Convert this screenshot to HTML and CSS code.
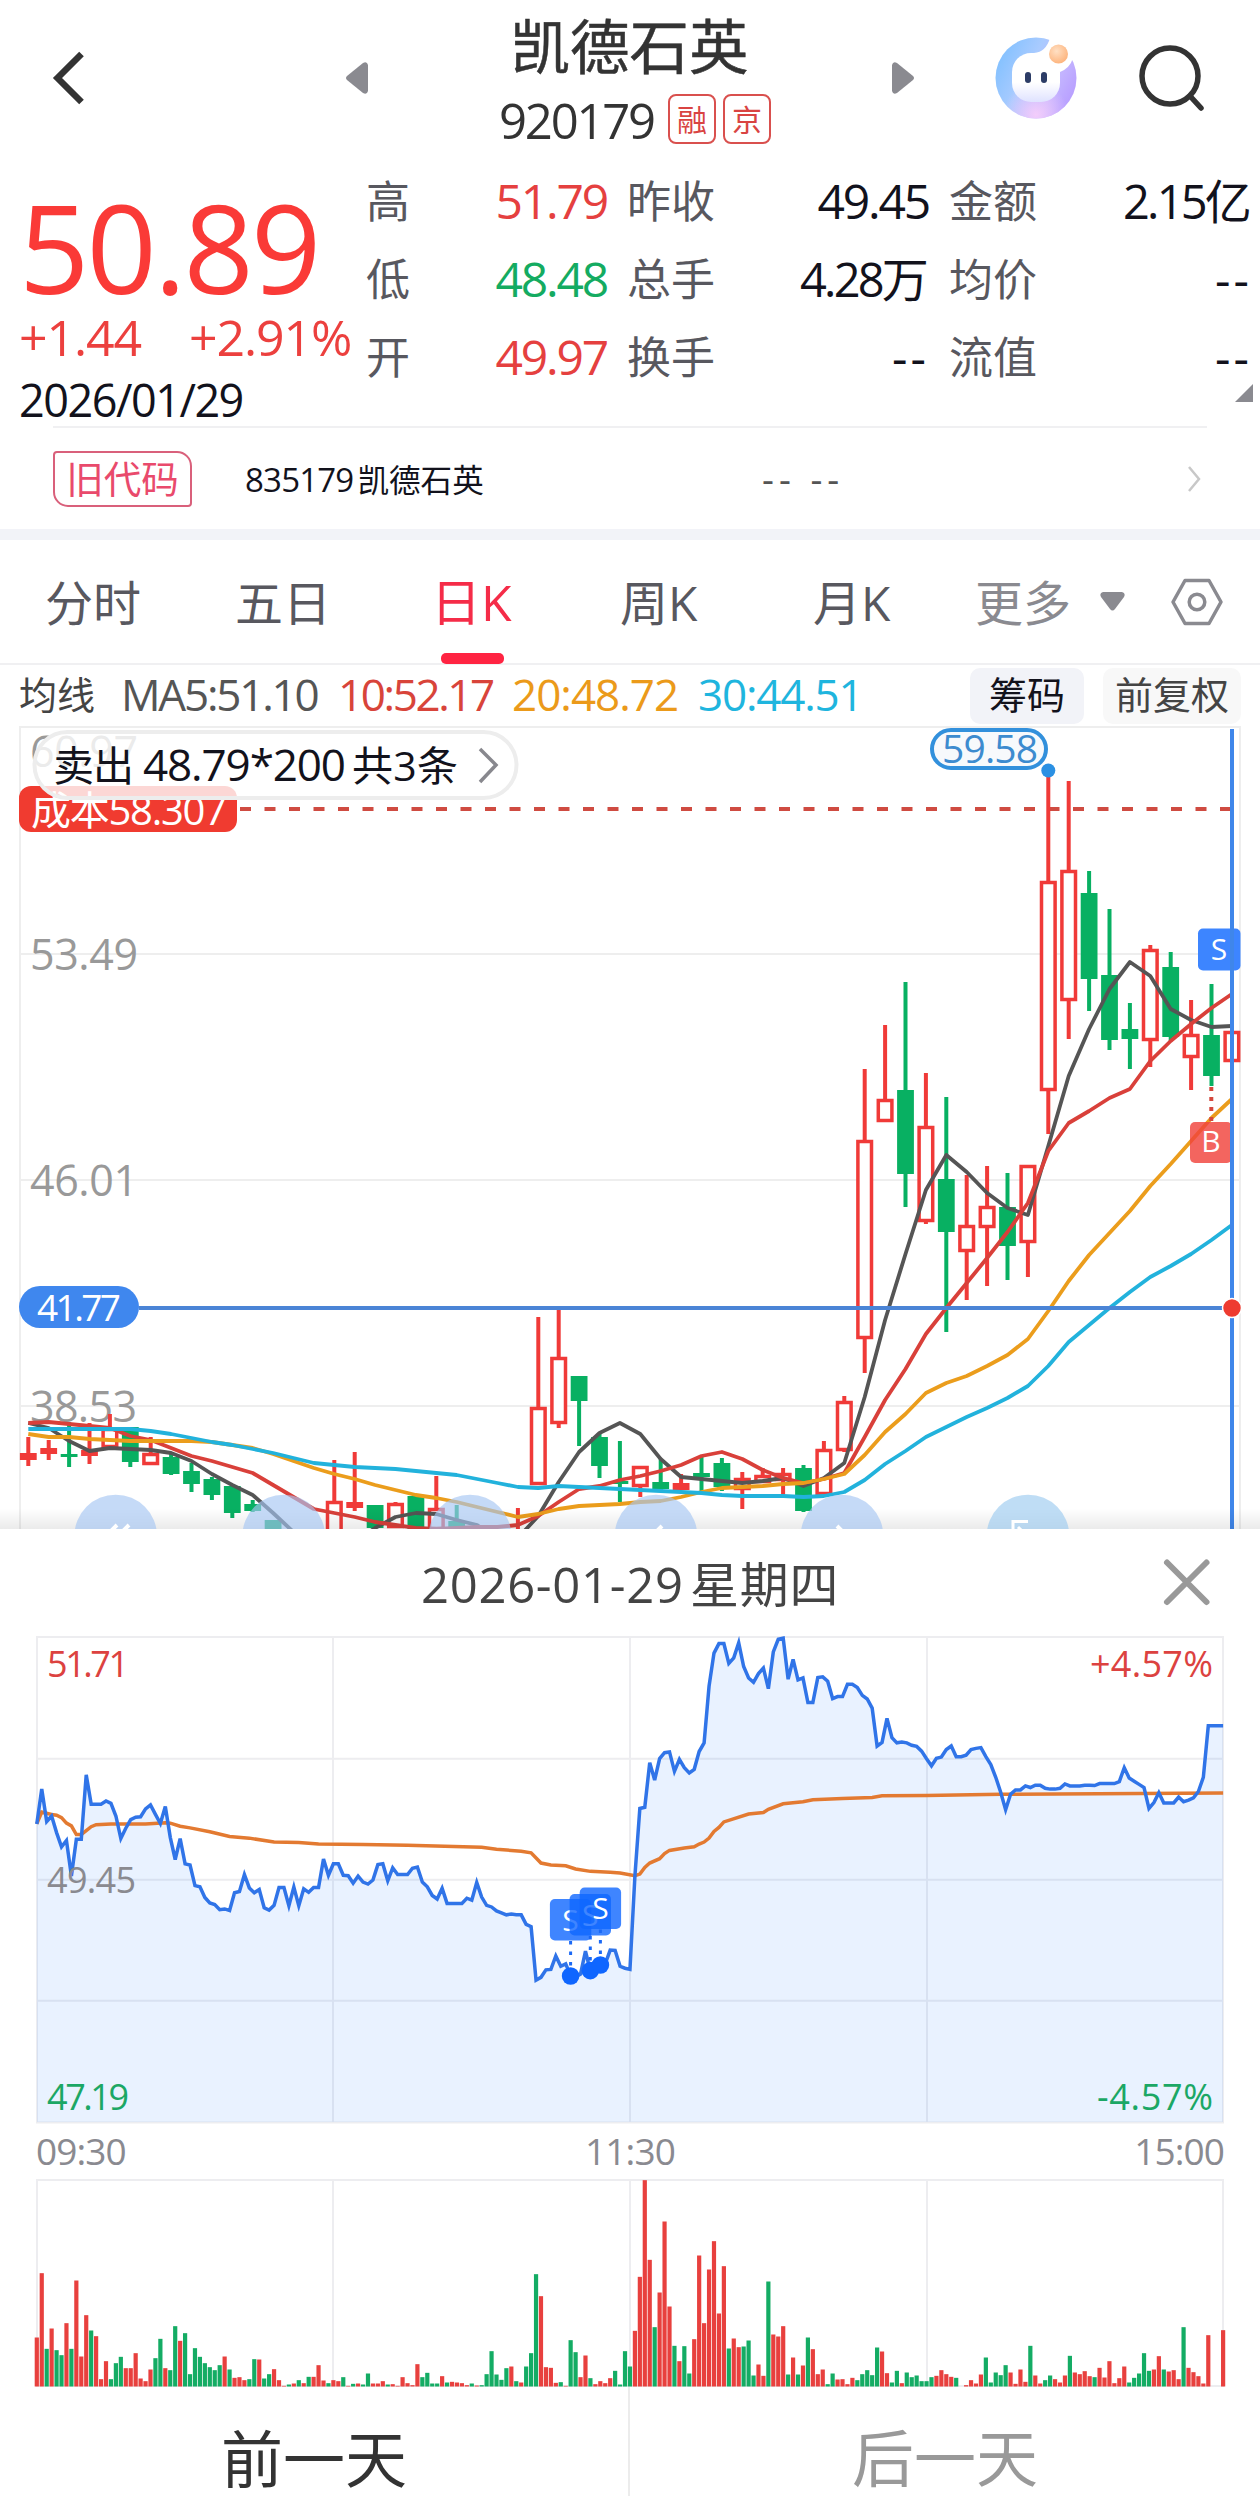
FILE: index.html
```html
<!DOCTYPE html>
<html lang="zh-CN">

<head>
    <meta charset="UTF-8">
    <meta name="viewport" content="width=device-width, initial-scale=1.0">
    <title>凯德石英 920179</title>
    <link rel="stylesheet" href="styles.css">
</head>

<body>
    <header class="header">
        <svg class="back" width="40" height="60" viewBox="0 0 40 60">
            <path d="M31.500 6 L7.500 30 L31.500 54" fill="none" stroke="#333" stroke-width="6.500" />
        </svg>
        <svg class="prev" width="24" height="34" viewBox="0 0 24 34">
            <path d="M23 4 V30 Q22 34 18 32 L2 19 Q0 17 2 15 L18 2 Q22 0 23 4Z" fill="#8a8a90" />
        </svg>
        <div class="stock">
            <h1>凯德石英</h1>
            <div class="code">
                <span class="code-num">920179</span>
                <span class="mark">融</span>
                <span class="mark">京</span>
            </div>
        </div>
        <svg class="next" width="24" height="34" viewBox="0 0 24 34">
            <path d="M1 4 V30 Q2 34 6 32 L22 19 Q24 17 22 15 L6 2 Q2 0 1 4Z" fill="#8a8a90" />
        </svg>
        <svg class="robot" width="84" height="84" viewBox="0 0 84 84">
            <defs>
                <linearGradient id="ring" x1="0" y1="0.2" x2="1" y2="0.7">
                    <stop offset="0" stop-color="#7fc0ff" />
                    <stop offset="0.4" stop-color="#a9cbff" />
                    <stop offset="0.75" stop-color="#c3b4ff" />
                    <stop offset="1" stop-color="#b79dff" />
                </linearGradient>
                <radialGradient id="glow" cx="0.5" cy="0.95" r="0.4">
                    <stop offset="0" stop-color="#f3cdfb" />
                    <stop offset="1" stop-color="#f3cdfb" stop-opacity="0" />
                </radialGradient>
                <radialGradient id="ball" cx="0.4" cy="0.35" r="0.7">
                    <stop offset="0" stop-color="#ffe0c4" />
                    <stop offset="1" stop-color="#fdb27a" />
                </radialGradient>
                <linearGradient id="face" x1="0" y1="0" x2="0" y2="1">
                    <stop offset="0.6" stop-color="#fff" />
                    <stop offset="1" stop-color="#dfe2ff" />
                </linearGradient>
            </defs>
            <circle cx="42" cy="42" r="40.500" fill="url(#ring)" />
            <circle cx="42" cy="42" r="40.500" fill="url(#glow)" />
            <path d="M56 2 Q52 16 40 17 L66 36 Q76 32 79 22 L84 14 L70 0Z" fill="#fff" />
            <rect x="18" y="17" width="48" height="49" rx="19" fill="url(#face)" />
            <rect x="31" y="36" width="6" height="11" rx="3" fill="#2c3c66" />
            <rect x="47" y="36" width="6" height="11" rx="3" fill="#2c3c66" />
            <circle cx="64.500" cy="18" r="9.500" fill="url(#ball)" />
        </svg>
        <svg class="search" width="72" height="72" viewBox="0 0 72 72">
            <circle cx="34" cy="34" r="28" fill="none" stroke="#333" stroke-width="5.500" />
            <path d="M54 54 L65 66" stroke="#333" stroke-width="5.500" stroke-linecap="round" />
        </svg>
    </header>

    <section class="quote">
        <div class="now">
            <div class="price">50.89</div>
            <div class="change"><span>+1.44</span><span>+2.91%</span></div>
            <div class="date">2026/01/29</div>
        </div>
        <dl class="stats">
            <div><dt>高</dt><dd class="up">51.79</dd></div>
            <div><dt>昨收</dt><dd>49.45</dd></div>
            <div><dt>金额</dt><dd class="unit">2.15亿</dd></div>
            <div><dt>低</dt><dd class="down">48.48</dd></div>
            <div><dt>总手</dt><dd class="unit">4.28万</dd></div>
            <div><dt>均价</dt><dd class="none">--</dd></div>
            <div><dt>开</dt><dd class="up">49.97</dd></div>
            <div><dt>换手</dt><dd class="none">--</dd></div>
            <div><dt>流值</dt><dd class="none">--</dd></div>
        </dl>
        <svg class="corner" width="18" height="18" viewBox="0 0 18 18"><path d="M18 0 V18 H0Z" fill="#8a8a90" /></svg>
    </section>

    <section class="oldcode">
        <span class="oldcode-tag">旧代码</span>
        <span class="oldcode-name"><b>835179</b>凯德石英</span>
        <span class="oldcode-val">-- --</span>
        <svg width="16" height="28" viewBox="0 0 16 28"><path d="M2 2 L12 14 L2 26" fill="none" stroke="#c8c8c8" stroke-width="2.500" /></svg>
    </section>

    <nav class="tabs">
        <span>分时</span>
        <span>五日</span>
        <span class="active">日K</span>
        <span>周K</span>
        <span>月K</span>
        <span class="more">更多</span>
        <svg width="26" height="22" viewBox="0 0 26 22"><path d="M3 1 H22 Q26 2 24 6 L15 18 Q12.500 21 10 18 L1 6 Q-1 2 3 1Z" fill="#8a8a90" /></svg>
        <svg width="54" height="48" viewBox="0 0 54 48" fill="none" stroke="#8a8a90" stroke-width="3.500">
            <path d="M15 2.500 H39 L51 24 L39 45.500 H15 L3 24Z" stroke-linejoin="round" />
            <circle cx="27" cy="24" r="7.800" />
        </svg>
    </nav>

    <div class="ma">
        <span class="ma-name">均线</span>
        <span class="ma5">MA5:51.10</span>
        <span class="ma10">10:52.17</span>
        <span class="ma20">20:48.72</span>
        <span class="ma30">30:44.51</span>
        <span class="chip">筹码</span>
        <span class="chip adjust">前复权</span>
    </div>

    <svg class="kline" width="1260" height="803" viewBox="0 726 1260 803">
        <defs>
            <linearGradient id="shade" x1="0" y1="0" x2="0" y2="1">
                <stop offset="0" stop-color="#000" stop-opacity="0" />
                <stop offset="1" stop-color="#000" stop-opacity="0.080" />
            </linearGradient>
        </defs>
        <path d="M20 1540 V727 H1240 V1540 M20 954 H1240 M20 1180 H1240 M20 1406 H1240" fill="none" stroke="#eee" stroke-width="2" />
        <g class="axis">
            <text x="30" y="767" textLength="108">60.97</text>
            <text x="30" y="970" textLength="108">53.49</text>
            <text x="30" y="1196" textLength="108">46.01</text>
            <text x="30" y="1422" textLength="107">38.53</text>
        </g>
        <path d="M240 809 H1232" stroke="#cf4b41" stroke-width="4" stroke-dasharray="11 13.500" />
        <g id="candles"></g>
        <g id="averages"></g>

        <path d="M139 1308 H1222" stroke="#4a84d6" stroke-width="4" />
        <rect x="19" y="1286" width="120" height="42" rx="21" fill="#3f87ee" />
        <text class="tag-text" x="37" y="1321" textLength="84" font-size="37">41.77</text>

        <rect x="19" y="786" width="218" height="46" rx="12" fill="#f03b30" />
        <text class="tag-text" x="31" y="825" textLength="196" font-size="40">成本58.307</text>

        <rect x="932" y="730" width="114" height="38" rx="19" fill="#f7f9fc" stroke="#3290dc" stroke-width="4" />
        <text x="942" y="763" textLength="96" font-size="39" fill="#3d8bcf">59.58</text>
        <circle cx="1048.300" cy="770.500" r="7" fill="#2b90e3" />

        <path d="M1211.300 1087 V1122" stroke="#d4473c" stroke-width="4" stroke-dasharray="4 6" />
        <rect x="1190" y="1122" width="42" height="41" rx="5" fill="#f0433c" fill-opacity="0.820" />
        <text class="bs" x="1211" y="1152" text-anchor="middle">B</text>
        <rect x="1198" y="928.500" width="42.500" height="42" rx="5" fill="#3d85ff" />
        <text class="bs" x="1219" y="960" text-anchor="middle">S</text>
        <path d="M1232 729 V1529" stroke="#3f86ea" stroke-width="4" />
        <circle cx="1232" cy="1308" r="9.500" fill="#ee3b30" stroke="#fff" stroke-width="1.500" />

        <rect x="0" y="1508" width="1260" height="21" fill="url(#shade)" />
        <g fill="#a6c6f2" fill-opacity="0.650">
            <circle cx="115.700" cy="1536" r="41.300" />
            <circle cx="283.700" cy="1536" r="41.300" />
            <circle cx="470" cy="1536" r="41.300" />
            <circle cx="656" cy="1536" r="41.300" />
            <circle cx="842" cy="1536" r="41.300" />
            <circle cx="1028" cy="1536" r="41.300" fill="#9ccbf0" />
        </g>
        <g fill="none" stroke="#fff" stroke-width="4">
            <path d="M117 1525 L105 1537 M129 1525 L117 1537" />
            <path d="M662 1526 L650 1538 M837 1526 L849 1538" />
            <path d="M1028 1521.500 H1013 V1540 M1018 1527 L1028 1537" stroke-width="3" />
        </g>

        <rect x="34.500" y="732" width="482" height="66" rx="33" fill="#fff" fill-opacity="0.800" stroke="#ededed" stroke-width="4" />
        <g class="trade">
            <text x="53" y="781" font-size="41" textLength="81">卖出</text>
            <text x="143" y="781" textLength="203">48.79*200</text>
            <text x="352" y="781" font-size="41" textLength="106">共3条</text>
        </g>
        <path d="M480 749 L496 765 L480 782" fill="none" stroke="#88888e" stroke-width="3.500" />
    </svg>

    <section class="day">
        <div class="day-head">
            <h2>2026-01-29 星期四</h2>
            <svg width="50" height="50" viewBox="0 0 50 50"><path d="M5 5.500 L44.500 45 M44.500 5.500 L5 45" stroke="#999" stroke-width="6" stroke-linecap="round" /></svg>
        </div>
        <svg class="minute" width="1260" height="492" viewBox="0 1634 1260 492">
            <path d="M37 1637 H1223 V2122.500 H37Z M333 1637 V2122 M630 1637 V2122 M927 1637 V2122 M37 1758.700 H1223 M37 1879.700 H1223 M37 2000.700 H1223" fill="none" stroke="#ededf0" stroke-width="2" />
            <g id="trend"></g>
            <g class="minute-text">
                <text x="47" y="1676.500" textLength="82" fill="#dc4240">51.71</text>
                <text x="47" y="1893" textLength="89" fill="#8a8a90">49.45</text>
                <text x="47" y="2110" textLength="82" fill="#1ba765">47.19</text>
                <text x="1090" y="1676.500" textLength="123" fill="#dc4240">+4.57%</text>
                <text x="1097" y="2110" textLength="116" fill="#1ba765">-4.57%</text>
            </g>
            <g id="sells"></g>
        </svg>
        <div class="times"><span>09:30</span><span>11:30</span><span>15:00</span></div>
        <svg class="volume" width="1260" height="210" viewBox="0 2177 1260 210">
            <path d="M37 2180 H1223 V2386 H37Z M333 2180 V2386 M630 2180 V2386 M927 2180 V2386" fill="none" stroke="#ededf0" stroke-width="2" />
            <g id="bars"></g>
        </svg>
        <div class="switch">
            <button>前一天</button>
            <button class="off">后一天</button>
        </div>
    </section>

    <script>
        var RED = "#f03a38", GREEN = "#08b062";

        function add(id, html) {
            document.getElementById(id).innerHTML += html;
        }

        //日K: [最高, 最低, 实体上, 实体下, 类型] r=空心红 f=实心红 g=绿
        var candles = [
            [1437, 1466, 1453, 1460, "f"], [1440, 1460, 1448, 1454, "f"], [1422, 1467, 1454, 1457, "g"], [1423, 1464, 1450, 1456, "f"],
            [1414, 1448, 1428, 1448, "r"], [1427, 1467, 1427, 1462, "g"], [1437, 1465, 1453, 1465, "r"], [1454, 1475, 1457, 1474, "g"],
            [1463, 1492, 1471, 1484, "g"], [1477, 1500, 1479, 1495, "g"], [1486, 1518, 1486, 1513, "g"], [1500, 1512, 1504, 1511, "g"],
            [1520, 1540, 1520, 1540, "g"], null, null, [1460, 1545, 1501, 1545, "r"],
            [1452, 1511, 1502, 1508, "f"], [1505, 1535, 1505, 1528, "g"], [1502, 1528, 1503, 1528, "r"], [1496, 1535, 1496, 1535, "g"],
            [1476, 1540, 1508, 1530, "r"], [1505, 1540, 1521, 1540, "g"], null, null,
            [1508, 1545, 1540, 1545, "r"], [1317, 1485, 1407, 1485, "r"], [1310, 1428, 1357, 1424, "r"], [1376, 1446, 1376, 1401, "g"],
            [1433, 1478, 1437, 1466, "g"], [1441, 1502, 1481, 1484, "g"], [1466, 1497, 1466, 1487, "r"], [1459, 1490, 1482, 1489, "g"],
            [1474, 1490, 1483, 1490, "f"], [1457, 1491, 1473, 1477, "g"], [1458, 1491, 1463, 1487, "g"], [1472, 1509, 1478, 1490, "r"],
            [1468, 1483, 1475, 1483, "r"], [1468, 1495, 1473, 1481, "r"], [1465, 1512, 1468, 1511, "g"], [1441, 1495, 1449, 1495, "r"],
            [1396, 1452, 1401, 1451, "r"], [1069, 1373, 1140, 1339, "r"], [1025, 1122, 1099, 1122, "r"], [982, 1207, 1090, 1174, "g"],
            [1073, 1224, 1126, 1222, "r"], [1097, 1332, 1179, 1232, "g"], [1175, 1300, 1225, 1252, "r"], [1166, 1286, 1206, 1228, "r"],
            [1173, 1280, 1207, 1246, "g"], [1165, 1277, 1165, 1243, "r"], [770, 1134, 881, 1091, "r"], [781, 1039, 870, 1001, "r"],
            [871, 1011, 893, 979, "g"], [909, 1050, 975, 1040, "g"], [1003, 1069, 1029, 1039, "g"], [945, 1067, 949, 1041, "r"],
            [952, 1041, 967, 1037, "g"], [1000, 1090, 1034, 1058, "r"], [984, 1086, 1035, 1076, "g"], [1031, 1062, 1031, 1062, "r"]
        ];

        function kx(i) {
            return 28.3 + i * 20.4;
        }

        var html = "";
        candles.forEach(function (c, i) {
            if (!c) return;
            var x = kx(i), col = c[4] == "g" ? GREEN : RED;
            if (c[4] == "r") {
                html += `<path d="M${x} ${c[0]}V${c[2]}M${x} ${c[3]}V${c[1]}" stroke="${col}" stroke-width="4"/>`;
                html += `<rect x="${x - 6.8}" y="${c[2] + 1.5}" width="13.6" height="${c[3] - c[2] - 3}" fill="#fff" stroke="${col}" stroke-width="3.500"/>`;
            } else {
                html += `<path d="M${x} ${c[0]}V${c[1]}" stroke="${col}" stroke-width="4"/>`;
                html += `<rect x="${x - 8.4}" y="${c[2]}" width="16.8" height="${c[3] - c[2]}" fill="${col}"/>`;
            }
        });
        add("candles", html);

        var averages = {
            "#555": [1423, 1428, 1441, 1451, 1448, 1449, 1450, 1453, 1461, 1474, 1485, 1495, 1513, 1532, 1545, 1550, 1542, 1528, 1517, 1513,
                1514, 1520, 1525, 1540, 1538, 1516, 1482, 1452, 1433, 1423, 1434, 1459, 1477, 1479, 1481, 1483, 1481, 1478, 1486, 1478,
                1463, 1397, 1320, 1254, 1190, 1155, 1172, 1193, 1208, 1215, 1146, 1076, 1029, 989, 962, 976, 1009, 1020, 1027, 1026],
            "#d9403a": [1423, 1422, 1424, 1426, 1428, 1436, 1440, 1448, 1456, 1461, 1467, 1473, 1485, 1497, 1509, 1513, 1517, 1522, 1525, 1528,
                1529, 1528, 1527, 1527, 1525, 1516, 1502, 1489, 1486, 1480, 1476, 1471, 1465, 1456, 1452, 1459, 1470, 1478, 1483, 1479,
                1473, 1437, 1400, 1369, 1334, 1308, 1283, 1258, 1232, 1203, 1151, 1123, 1111, 1098, 1089, 1061, 1041, 1024, 1008, 994],
            "#eb9d1c": [1434, 1437, 1437, 1439, 1440, 1441, 1441, 1441, 1441, 1442, 1445, 1448, 1454, 1461, 1468, 1474, 1479, 1485, 1490, 1495,
                1498, 1502, 1507, 1512, 1517, 1514, 1509, 1506, 1505, 1504, 1502, 1501, 1497, 1492, 1488, 1487, 1486, 1484, 1483, 1479,
                1474, 1455, 1432, 1414, 1393, 1383, 1376, 1366, 1355, 1339, 1311, 1281, 1255, 1233, 1211, 1186, 1164, 1141, 1118, 1099],
            "#22b2dc": [1429, 1429, 1429, 1429, 1429, 1429, 1431, 1434, 1438, 1442, 1445, 1449, 1453, 1458, 1463, 1465, 1467, 1468, 1469, 1471,
                1473, 1475, 1479, 1483, 1487, 1488, 1486, 1487, 1488, 1489, 1490, 1491, 1492, 1493, 1495, 1496, 1496, 1496, 1497, 1496,
                1492, 1480, 1464, 1451, 1437, 1427, 1417, 1408, 1398, 1386, 1366, 1342, 1325, 1308, 1292, 1277, 1266, 1254, 1240, 1225]
        };
        for (var color in averages) {
            var pts = averages[color].map(function (y, i) { return kx(i) + "," + y; }).join(" ");
            add("averages", `<polyline points="${pts}" fill="none" stroke="${color}" stroke-width="3.800" stroke-linejoin="round"/>`);
        }

        //分时图, 每分钟一个点
        function mx(i) {
            return 36.8 + i * 4.943;
        }
        function my(v) {
            return 1540 + v / 2.529;
        }

        var line = [
            718, 630, 712, 698, 740, 776, 760, 850, 757, 757, 594, 668, 668, 668, 660, 666, 698, 755, 729, 707,
            701, 700, 680, 670, 694, 717, 674, 752, 808, 755, 819, 822, 874, 877, 904, 918, 922, 935, 933, 937,
            892, 889, 846, 880, 892, 884, 930, 936, 924, 879, 879, 925, 878, 925, 882, 891, 879, 879, 807, 848,
            819, 819, 848, 849, 868, 850, 865, 870, 860, 821, 819, 862, 829, 846, 846, 846, 830, 827, 865, 877,
            899, 908, 881, 919, 919, 919, 919, 906, 911, 866, 903, 924, 928, 938, 943, 948, 946, 948, 948, 972,
            978, 1113, 1106, 1087, 1086, 1052, 1078, 1072, 1102, 1105, 1098, 1040, 1090, 1082, 1075, 1072, 1037, 1038, 1078, 1083,
            1086, 850, 679, 676, 563, 607, 553, 538, 536, 585, 555, 576, 589, 580, 535, 513, 370, 286, 262, 262,
            312, 298, 260, 320, 349, 360, 338, 324, 376, 283, 251, 248, 352, 302, 354, 349, 411, 411, 348, 346,
            357, 401, 396, 396, 365, 365, 373, 393, 402, 425, 521, 512, 451, 500, 513, 511, 513, 519, 522, 534,
            553, 571, 552, 549, 530, 521, 548, 548, 544, 530, 527, 525, 548, 568, 600, 638, 682, 643, 632, 632,
            622, 626, 620, 620, 628, 630, 630, 628, 617, 622, 622, 622, 620, 620, 621, 616, 616, 616, 616, 611,
            576, 602, 610, 618, 626, 679, 664, 639, 665, 665, 665, 650, 662, 658, 652, 636, 600, 470, 470, 470, 470
        ];
        var mean = [
            [0, 718], [1, 688], [3, 694], [4, 696], [5, 702], [6, 716], [7, 723], [8, 745], [9, 745], [10, 735], [11, 725], [12, 720],
            [15, 718], [22, 718], [26, 715], [27, 716], [29, 724], [31, 728], [35, 738], [39, 750], [43, 754], [48, 764], [53, 765],
            [57, 769], [66, 770], [75, 772], [90, 777], [93, 782], [98, 787], [100, 791], [102, 817], [104, 822], [107, 824], [109, 832],
            [112, 838], [116, 840], [118, 842], [121, 849], [122, 845], [123, 828], [124, 817], [126, 806], [127, 793], [128, 785],
            [131, 779], [133, 776], [134, 769], [135, 764], [136, 754], [137, 737], [138, 727], [139, 713], [144, 693], [147, 689],
            [148, 681], [151, 667], [155, 662], [157, 657], [163, 654], [169, 651], [171, 647], [180, 646], [195, 643], [240, 640]
        ];
        var linePts = line.map(function (v, i) { return mx(i) + "," + my(v); }).join(" ");
        var meanPts = mean.map(function (p) { return mx(p[0]) + "," + my(p[1]); }).join(" ");
        add("trend", `<polygon points="37,2122 ${linePts} 1223,2122" fill="#1a78ff" fill-opacity="0.095"/>`);
        add("trend", `<polyline points="${meanPts}" fill="none" stroke="#e37a31" stroke-width="3.500"/>`);
        add("trend", `<polyline points="${linePts}" fill="none" stroke="#3074e8" stroke-width="3.500"/>`);

        //卖出标记: x, 点y, 方块顶
        [[570.6, 1976, 1899], [590.3, 1970.6, 1894], [600.4, 1965, 1887.5]].forEach(function (s) {
            add("sells", `<path d="M${s[0]} ${s[2] + 42}V${s[1]}" stroke="#1b69f5" stroke-width="3" stroke-dasharray="3.500 7"/>
                <circle cx="${s[0]}" cy="${s[1]}" r="8.800" fill="#0f66ff"/>
                <rect x="${s[0] - 20.7}" y="${s[2]}" width="41.400" height="41.500" rx="5" fill="#0f66ff" fill-opacity="0.800"/>
                <text class="bs" x="${s[0]}" y="${s[2] + 31.5}" text-anchor="middle">S</text>`);
        });

        //成交量: 正数红, 负数绿
        var volume = [
            147, 340, -113, 174, -109, -94, 190, -113, 318, 90, 214, -168, 151, 22, 76, -22, -70, -89, 55, 55,
            100, 24, 16, 51, -85, -143, 55, -49, -181, 137, -160, -37, -115, -89, -70, -58, -49, -64, 90, -51,
            26, 28, 19, -22, -82, 81, -24, -37, 52, 19, 2, -6, 9, -19, 10, -29, 29, 64, 18, -10,
            19, 16, -28, 2, -8, 9, -6, -39, 9, 9, 16, -6, 7, 2, 28, 10, 4, 67, -28, -41,
            -9, -9, 31, -12, 14, 12, 10, 4, -9, 3, -4, -37, -106, -36, -20, -55, 60, -16, 12, -60,
            -100, -337, 271, 58, 56, 11, -13, 2, -139, -103, 28, 93, -25, 7, 16, 10, 25, -47, -6, -106,
            -60, 167, 329, 619, 380, -178, 282, 495, 240, -122, 76, -121, -39, 142, 393, 190, 351, 436, 219, 361,
            -114, 144, 118, -120, -138, -33, 66, 32, -315, 156, 150, 181, -36, 87, -36, 63, -147, 112, 37, 51,
            -7, -39, 21, 22, 7, 26, -19, -37, -49, -34, -117, 105, 40, -12, -47, 10, -42, -28, -33, -16,
            -16, -28, 32, 49, 37, 29, -26, 0, 4, 19, 9, 36, -87, -12, -42, -34, -64, 42, 8, 51,
            14, -122, 33, 9, -19, -33, 22, 12, 33, -92, 42, 37, 46, 31, -28, 56, 27, 76, 10, 25,
            60, -12, -26, -39, -100, -47, 51, 91, -51, 45, 49, 22, -178, 56, 43, 31, 9, 154, 0, 0, 169
        ];
        add("bars", volume.map(function (v, i) {
            var h = Math.abs(v) / 3;
            return `<rect x="${mx(i) - 2.1}" y="${2386.5 - h}" width="4.2" height="${h}" fill="${v > 0 ? "#e8403e" : "#14ac64"}"/>`;
        }).join(""));
    </script>
</body>

</html>
```
FILE: styles.css
```css
* {
    box-sizing: border-box;
}

body {
    margin: 0;
    width: 1260px;
    background: #fff;
    color: #12121c;
    font-family: "Open Sans", "Noto Sans CJK SC", sans-serif;
    overflow-x: hidden;
}

svg {
    display: block;
    flex: none;
}

h1,
h2,
dl,
dd {
    margin: 0;
    font-weight: normal;
}

.header {
    display: flex;
    align-items: center;
    height: 156px;
    color: #333;
}

.back {
    margin-left: 50px;
}

.prev {
    margin-left: 255px;
}

.stock {
    width: 300px;
    height: 156px;
    margin-left: 117px;
}

.stock h1 {
    padding-right: 13px;
    text-align: center;
    font-size: 59.5px;
    line-height: 92px;
    -webkit-text-stroke: 0.5px #333;
}

.code {
    display: flex;
    align-items: center;
    gap: 7px;
    height: 54px;
    padding-left: 13px;
}

.code-num {
    width: 162px;
    padding-top: 2px;
    font-size: 49px;
    line-height: 54px;
    letter-spacing: -2.2px;
}

.mark {
    width: 48px;
    height: 50px;
    border: 2px solid #d9504e;
    border-radius: 8px;
    color: #d94442;
    font-size: 30px;
    line-height: 47px;
    text-align: center;
}

.next {
    margin-left: 105px;
}

.robot {
    margin-left: 79px;
}

.search {
    margin-left: 58px;
}

.quote {
    position: relative;
    display: flex;
    height: 270px;
}

.now {
    width: 366px;
    padding: 22px 0 0 19px;
}

.price {
    color: #fa3a37;
    font-size: 123px;
    line-height: 137px;
    letter-spacing: -2.8px;
}

.change {
    display: flex;
    gap: 48px;
    color: #ec403e;
    font-size: 50px;
    line-height: 44px;
    letter-spacing: -1.1px;
}

.date {
    margin-top: 19px;
    font-size: 45px;
    line-height: 44px;
    letter-spacing: -1.5px;
}

.stats {
    display: grid;
    grid-template-columns: 241px 302px 303px;
    grid-auto-rows: 78px;
    column-gap: 20px;
    padding-top: 6px;
}

.stats div {
    display: flex;
    justify-content: space-between;
    line-height: 78px;
}

.stats dt {
    color: #58585f;
    font-size: 44px;
}

.stats dd {
    font-size: 48px;
    letter-spacing: -2.2px;
}

.stats .unit {
    padding-right: 3px;
    font-size: 47px;
    letter-spacing: -2.8px;
}

.stats .up {
    color: #e5403f;
}

.stats .down {
    color: #14ab61;
}

.stats .none {
    letter-spacing: 3px;
}

.corner {
    position: absolute;
    right: 7px;
    top: 228px;
}

.oldcode {
    display: flex;
    align-items: center;
    height: 103px;
    margin: 0 53px;
    border-top: 2px solid #f0f0f2;
}

.oldcode-tag {
    width: 139px;
    height: 56px;
    border: 2px solid #d9607b;
    border-radius: 4px 15px 4px 15px;
    color: #e94a6c;
    font-size: 37.5px;
    line-height: 51px;
    text-align: center;
}

.oldcode-name {
    width: 517px;
    margin-left: 53px;
    font-size: 31.6px;
}

.oldcode-name b {
    margin-right: 4px;
    font-size: 33px;
    font-weight: normal;
    letter-spacing: -0.8px;
}

.oldcode-val {
    width: 425px;
    color: #555;
    font-size: 37px;
    letter-spacing: 5px;
}

.tabs {
    display: grid;
    grid-template-columns: 190px 201px 184px 193px 162px 125px 70px 54px;
    align-items: center;
    height: 136px;
    padding-left: 45px;
    border-top: 11px solid #f2f3f8;
    border-bottom: 2px solid #f0f0f2;
    color: #58585f;
    font-size: 48px;
    line-height: 123px;
}

.tabs span {
    padding-top: 1px;
}

.tabs .active {
    position: relative;
    left: -5px;
    color: #f52c48;
    font-size: 50px;
}

.tabs .active::after {
    content: "";
    position: absolute;
    left: 10px;
    bottom: 0;
    width: 63px;
    height: 11px;
    border-radius: 5px;
    background: #ff2442;
}

.tabs .more {
    color: #8a8a90;
}

.ma {
    display: grid;
    grid-template-columns: 102px 217px 174px 186px 274px 133px 138px;
    align-items: center;
    height: 61px;
    padding-left: 19px;
    font-size: 44px;
    line-height: 56px;
}

.ma span:not(.chip) {
    padding-bottom: 3px;
}

.ma-name {
    color: #444;
    font-size: 38px;
}

.ma5 {
    color: #555;
    letter-spacing: -2.2px;
}

.ma10 {
    color: #d8443a;
    letter-spacing: -2.4px;
}

.ma20 {
    color: #eb9a1a;
    letter-spacing: -1px;
}

.ma30 {
    color: #1fb5de;
    letter-spacing: -1.2px;
}

.chip {
    width: 114px;
    height: 56px;
    margin-left: -2px;
    border-radius: 10px;
    background: #f2f3f8;
    font-size: 38px;
    line-height: 53px;
    text-align: center;
}

.adjust {
    width: 138px;
    background: #f8f8f8;
    color: #444;
}

.kline .axis {
    fill: #999;
    font-size: 43px;
}

.tag-text,
.bs {
    fill: #fff;
}

.bs {
    font-size: 30px;
}

.trade {
    fill: #12121c;
    font-size: 44px;
}

.day-head {
    display: flex;
    justify-content: flex-end;
    align-items: center;
    height: 105px;
    padding-right: 48px;
}

.day-head h2 {
    width: 420px;
    margin-right: 321px;
    color: #444;
    font-size: 49px;
    letter-spacing: 0.7px;
    word-spacing: -7px;
    white-space: nowrap;
}

.minute-text {
    font-size: 36px;
}

.times {
    display: grid;
    grid-template-columns: 1fr 1fr 1fr;
    height: 51px;
    padding: 0 36px;
    color: #8a8a90;
    font-size: 37px;
    line-height: 50px;
    letter-spacing: -0.9px;
}

.times span:nth-child(2) {
    text-align: center;
}

.times span:nth-child(3) {
    text-align: right;
}

.switch {
    display: grid;
    grid-template-columns: 1fr 1fr;
    height: 109px;
}

.switch button {
    padding: 35px 0 0;
    border: 0;
    border-right: 2px solid #ececec;
    background: none;
    color: #333;
    font-family: inherit;
    font-size: 62px;
    line-height: 75px;
}

.switch .off {
    padding-top: 32px;
    border: 0;
    color: #999;
}
```
